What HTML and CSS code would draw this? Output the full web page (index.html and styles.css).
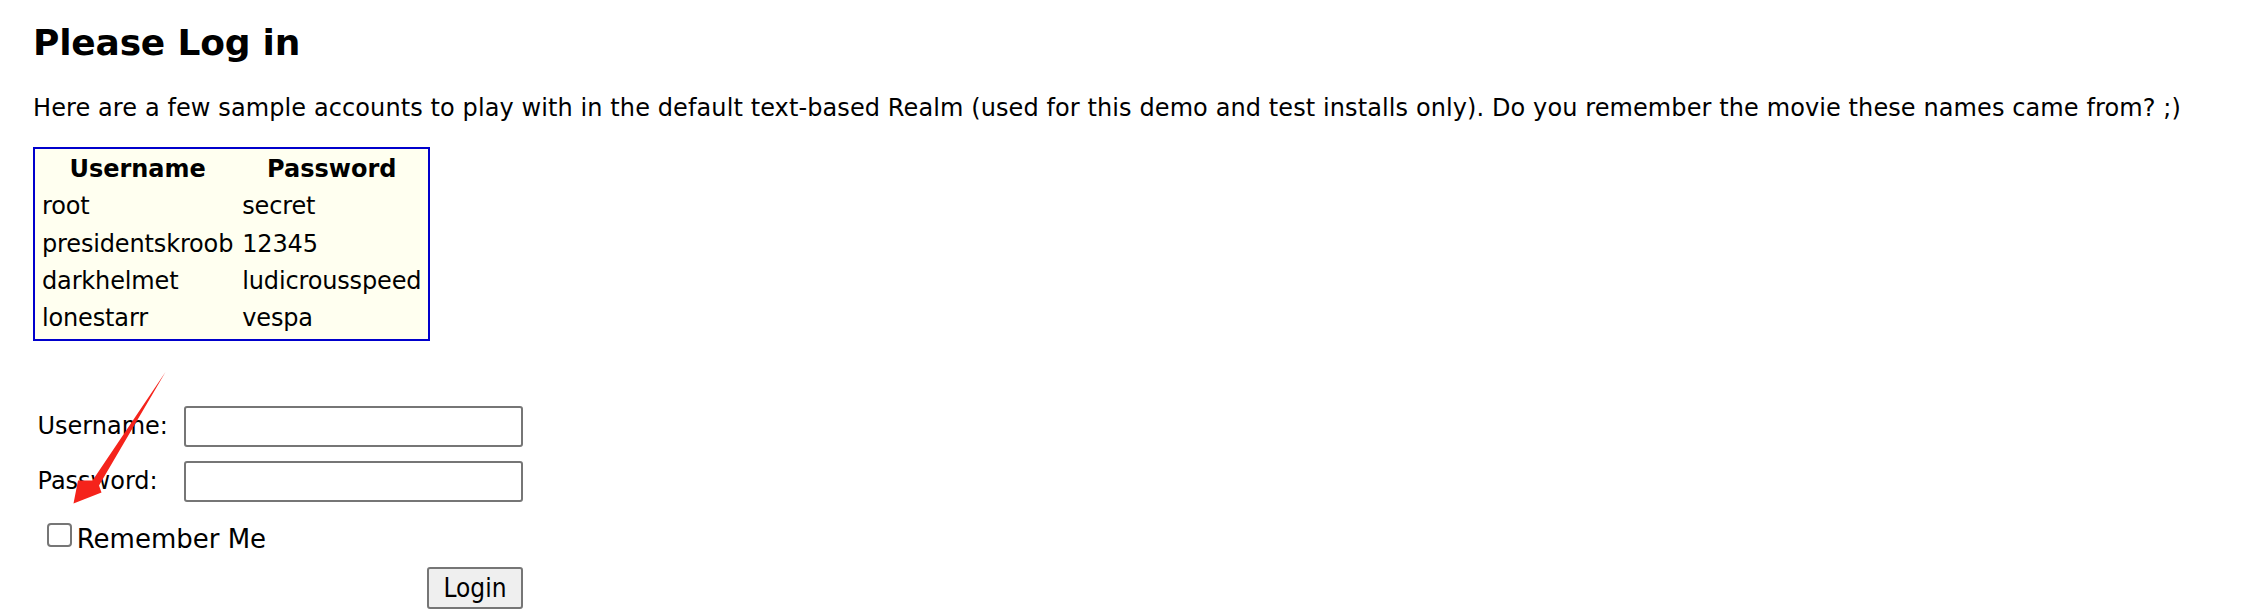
FILE: index.html
```html
<!DOCTYPE html>
<html lang="en">
<head>
<meta charset="utf-8">
<title>Please Log in</title>
<link rel="stylesheet" href="styles.css">
</head>
<body>
<h2 class="title">Please Log in</h2>
<p class="intro">Here are a few sample accounts to play with in the default text-based Realm (used for this demo and test installs only). Do you remember the movie these names came from? ;)</p>
<table class="accounts">
  <thead>
    <tr><th>Username</th><th>Password</th></tr>
  </thead>
  <tbody>
    <tr><td>root</td><td>secret</td></tr>
    <tr><td>presidentskroob</td><td>12345</td></tr>
    <tr><td>darkhelmet</td><td>ludicrousspeed</td></tr>
    <tr><td>lonestarr</td><td>vespa</td></tr>
  </tbody>
</table>
<form class="login">
  <div class="field"><label class="field-label" for="u">Username:</label><input class="text-input" id="u" type="text"></div>
  <div class="field field-second"><label class="field-label" for="p">Password:</label><input class="text-input" id="p" type="password"></div>
  <label class="remember"><input class="check" type="checkbox"><span class="remember-text">Remember Me</span></label>
  <div class="actions"><button class="btn" type="button">Login</button></div>
</form>
<svg class="annotation" width="2265" height="609" viewBox="0 0 2265 609" xmlns="http://www.w3.org/2000/svg">
  <polygon fill="#f5231b" points="165.5,372 99,485.5 101.5,492.5 73.5,503.5 78,480.5 92.5,480.5"/>
</svg>
</body>
</html>
```
FILE: styles.css
```css
html, body {
  background: #ffffff;
}
body {
  margin: 0;
  padding: 22px 0 0 33px;
  font-family: "DejaVu Sans", Verdana, sans-serif;
  font-size: 24px;
  color: #000000;
}
.title {
  margin: 0;
  font-size: 36px;
  line-height: 42px;
  font-weight: bold;
  letter-spacing: -0.2px;
}
.intro {
  margin: 30px 0 0 0;
  line-height: 29px;
  letter-spacing: 0.1px;
}
.accounts {
  margin-top: 23.5px;
  border: 2px solid #0000cc;
  background: #fffff0;
  border-spacing: 5px;
  font-size: 24px;
  line-height: 30.3px;
}
.accounts th,
.accounts td {
  padding: 0.9px 2px;
}
.accounts th {
  text-align: center;
  font-weight: bold;
}
.accounts td {
  text-align: left;
  letter-spacing: -0.15px;
}
.login {
  width: 490px;
  margin-top: 65px;
  display: flex;
  flex-direction: column;
}
.field {
  display: flex;
  align-items: center;
  padding-left: 4.5px;
}
.field-second {
  margin-top: 13.5px;
}
.field-label {
  flex: 0 0 146px;
  line-height: 29px;
}
.text-input {
  box-sizing: border-box;
  width: 339.5px;
  height: 41.5px;
  margin: 0;
  border: 2px solid #767676;
  border-radius: 3px;
  background: #ffffff;
}
.remember {
  display: flex;
  align-items: flex-start;
  height: 30px;
  margin-top: 20.4px;
  padding-left: 13.7px;
  font-size: 26px;
}
.check {
  appearance: none;
  -webkit-appearance: none;
  box-sizing: border-box;
  width: 25px;
  height: 24.5px;
  margin: 0;
  border: 2px solid #767676;
  border-radius: 4px;
  background: #ffffff;
}
.remember-text {
  margin-left: 5px;
  margin-top: 1px;
  line-height: 30px;
}
.actions {
  display: flex;
  justify-content: flex-end;
  margin-top: 14px;
}
.btn {
  box-sizing: border-box;
  width: 96px;
  height: 42px;
  padding: 0;
  margin: 0;
  border: 2px solid #767676;
  border-radius: 3px;
  background: #efefef;
  color: #000000;
  font-family: "DejaVu Sans Condensed", "Liberation Sans", sans-serif;
  font-size: 26px;
  line-height: 30px;
}
.annotation {
  position: absolute;
  left: 0;
  top: 0;
  pointer-events: none;
}
```
